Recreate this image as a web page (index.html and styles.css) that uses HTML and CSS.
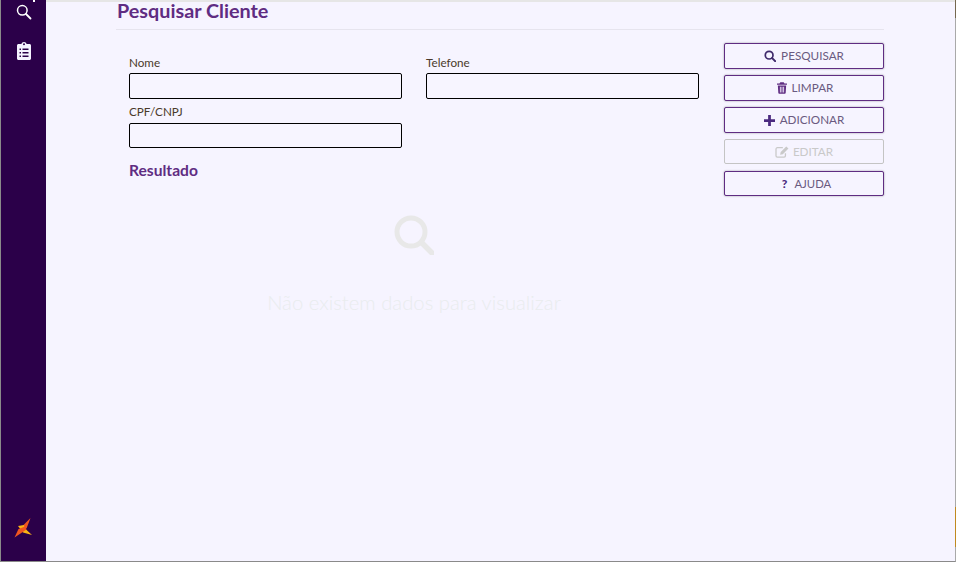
FILE: index.html
```html
<!DOCTYPE html>
<html lang="pt">
<head>
<meta charset="utf-8">
<title>Pesquisar Cliente</title>
<link rel="stylesheet" href="styles.css">
</head>
<body>
<div class="app">
  <nav class="sidebar">
    <div class="side-icons">
      <svg class="ico-search" viewBox="0 0 16 16" width="16" height="16"><circle cx="6.300" cy="6.300" r="4.800" fill="none" stroke="#fff" stroke-width="1.500"/><path d="M10 10l4.500 4.500" stroke="#fff" stroke-width="1.800" stroke-linecap="round"/></svg>
      <svg class="ico-clip" viewBox="0 0 14 18" width="14" height="18"><path fill="#f5f3ff" fill-rule="evenodd" d="M1.500 2H4.400C4.700.8 5.700 0 7 0s2.300.8 2.600 2h2.900c.8 0 1.500.7 1.500 1.500v13c0 .8-.7 1.500-1.500 1.500h-11C.7 18 0 17.300 0 16.500v-13C0 2.700.7 2 1.500 2zM6 2.200a1 1 0 1 0 2 0 1 1 0 0 0-2 0zM2.500 6.500v1.500h1.500V6.500zM5.500 6.500v1.500h6V6.500zM2.500 10v1.500h1.500V10zM5.500 10v1.500h6V10zM2.500 13.500V15h1.500v-1.500zM5.500 13.500V15h6v-1.500z"/></svg>
    </div>
    <svg class="logo" viewBox="0 0 18 20" width="18" height="20">
      <path fill="#f0561f" d="M16.500 0 8 8.500 12.500 10.500z"/>
      <path fill="#fbb414" d="M4 8 10 7 10.500 10 18 17 9 14.500z"/>
      <path fill="#f0561f" d="M0.500 19.500 4.500 11 11 8.500 12.500 11.500z"/>
    </svg>
  </nav>
  <main class="content">
    <h1 class="title">Pesquisar Cliente</h1>
    <div class="panel">
      <section class="search">
        <form class="fields">
          <label class="field"><span class="field-label">Nome</span><input class="input" type="text"></label>
          <label class="field"><span class="field-label">Telefone</span><input class="input" type="text"></label>
          <label class="field field-wide"><span class="field-label">CPF/CNPJ</span><input class="input" type="text"></label>
        </form>
        <h2 class="result-title">Resultado</h2>
        <div class="empty">
          <svg viewBox="0 0 40 40" width="40" height="40"><circle cx="17" cy="17" r="14" fill="none" stroke="#e8e8e8" stroke-width="5"/><path d="M27.500 27.500 38 38" stroke="#e8e8e8" stroke-width="5.500" stroke-linecap="round"/></svg>
          <p class="empty-text">Não existem dados para visualizar</p>
        </div>
      </section>
      <aside class="actions">
        <button class="btn" type="button"><svg viewBox="0 0 14 14" width="12" height="12"><circle cx="6" cy="6" r="4.500" fill="none" stroke="#3f2a6b" stroke-width="2"/><path d="M9.500 9.500 13 13" stroke="#3f2a6b" stroke-width="2.400" stroke-linecap="round"/></svg>PESQUISAR</button>
        <button class="btn" type="button"><svg class="ico-trash" viewBox="0 0 12 14" width="10" height="12"><path fill="#5f2c82" fill-rule="evenodd" d="M4 0h4l1 1.500h3V3H0V1.500h3zM1 4h10l-.6 9c0 .6-.5 1-1 1H2.600c-.5 0-1-.4-1-1zM3.500 5.500v7h1v-7zM5.500 5.500v7h1v-7zM7.500 5.500v7h1v-7z"/></svg>LIMPAR</button>
        <button class="btn" type="button"><svg viewBox="0 0 12 12" width="11" height="11"><path fill="#4b2a80" d="M4.500 0h3v4.500H12v3H7.500V12h-3V7.500H0v-3h4.500z"/></svg>ADICIONAR</button>
        <button class="btn btn-off" type="button" disabled><svg viewBox="0 0 16 14" width="14" height="12"><path fill="none" stroke="#c9c9c9" stroke-width="1.500" d="M12 8.500V11.500c0 .8-.7 1.500-1.500 1.500h-8C1.700 13 1 12.300 1 11.500v-8C1 2.700 1.700 2 2.500 2H9"/><path fill="#c9c9c9" d="M13 .5 15.500 3 9 9.500 5.800 10.200 6.500 7z"/></svg>EDITAR</button>
        <button class="btn btn-last" type="button"><span class="q">?</span>AJUDA</button>
      </aside>
    </div>
  </main>
</div>
</body>
</html>
```
FILE: styles.css
```css
* { box-sizing: border-box; }
html, body { margin: 0; height: 100%; }
body { background: #f6f4ff; font-family: Lato, "Noto Sans", sans-serif; overflow: hidden; }
.app { position: relative; display: flex; height: 562px; border-left: 1px solid #8a8a8a; border-right: 1px solid #a9a9a9; border-bottom: 1px solid #8a8a8a; }
.app::after { content: ""; position: absolute; top: 0; right: -1px; width: 1px; height: 561px; background: linear-gradient(to bottom, #75684f 0 18px, #a9a9a9 18px 507px, #c08a20 507px 547px, #a9a9a9 547px); }
.sidebar { position: relative; width: 45px; flex: none; background: #2b0049; display: flex; flex-direction: column; align-items: center; justify-content: space-between; padding: 4px 0 23px; }
.sidebar::before { content: ""; position: absolute; top: 0; left: 32px; width: 2px; height: 2px; background: #fff; }
.side-icons { display: flex; flex-direction: column; align-items: center; gap: 22px; }
.ico-clip { display: block; }
.ico-search { display: block; }
.logo { display: block; margin-left: -1px; }
.content { flex: 1; padding: 0 71px 0 70px; border-top: 2px solid #e6e6e6; }
.title { margin: 0; height: 28px; padding-left: 1px; font-size: 19.800px; line-height: 17px; font-weight: 700; color: #5f2c82; border-bottom: 1px solid #e6e4ee; }
.panel { display: flex; padding-top: 12px; }
.search { width: 608px; flex: none; padding: 13px 13px 0; }
.fields { display: grid; grid-template-columns: 273px 273px; column-gap: 24px; row-gap: 5px; }
.field { display: flex; flex-direction: column; }
.field-label { font-size: 11.700px; line-height: 14px; color: #4a3a2a; margin-bottom: 4px; }
.field-wide .field-label { margin-bottom: 5px; }
.input { height: 26px; border: 1px solid #000; border-radius: 2px; background: #f7f5ff; padding: 0 4px; outline: none; display: block; width: 100%; }
.field-wide .input { height: 25px; }
.result-title { margin: 13px 0 0; font-size: 15.600px; line-height: 18px; font-weight: 700; color: #5f2c82; }
.empty { display: flex; flex-direction: column; align-items: center; width: 570px; margin-top: 36px; }
.empty svg { display: block; }
.empty-text { margin: 35px 0 0; font-size: 20.300px; line-height: 24px; color: #e9ecee; font-weight: 300; }
.actions { width: 160px; flex: none; display: flex; flex-direction: column; gap: 6px; padding-top: 1px; }
.btn { height: 26px; display: flex; align-items: center; justify-content: center; gap: 5px; background: #f6f4ff; border: 1px solid #5f2c82; border-radius: 2px; box-shadow: 0 0 2px rgba(0,0,0,.4); font-family: inherit; font-size: 11.700px; line-height: 14px; color: #6a5a80; padding: 0 0 2px; }
.btn svg { margin-top: 2px; }
.ico-trash { margin-left: 2px; }
.btn-off { height: 25px; border-color: #c4c4c4; box-shadow: none; color: #c9c9c9; gap: 4px; }
.btn-last { height: 25px; margin-top: 1px; font-size: 11.300px; padding: 0; }
.q { font-weight: 900; color: #4b2a80; font-size: 12px; margin: 0 2px 0 5px; }
```
